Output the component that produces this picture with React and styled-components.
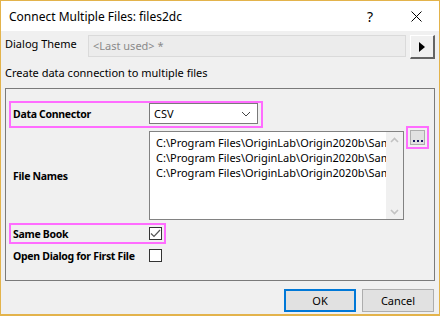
import styled, { createGlobalStyle } from "styled-components";

const GlobalStyle = createGlobalStyle`
    html, body {
        margin: 0;
        padding: 0;
        background: #f0f0f0;
    }
    body {
        font-family: "Noto Sans", "Liberation Sans", sans-serif;
        font-size: 11px;
        color: #000;
    }
`;

const Window = styled.div`
    box-sizing: border-box;
    width: 440px;
    height: 316px;
    border: 1px solid #e3b34b;
    border-bottom-width: 2px;
    background: #f0f0f0;
    display: flex;
    flex-direction: column;
`;

const TitleBar = styled.div`
    height: 30px;
    background: #fff;
    display: flex;
    align-items: center;
    padding-left: 8px;
    font-size: 12px;
`;

const Title = styled.div`
    flex: 1;
`;

const TitleButton = styled.div`
    width: ${props => props.$width}px;
    display: flex;
    justify-content: center;
    align-items: center;
    font-size: ${props => props.$size}px;
`;

const Body = styled.div`
    flex: 1;
    display: flex;
    flex-direction: column;
    padding: 4px 4px 0 4px;
`;

const ThemeRow = styled.div`
    display: flex;
    align-items: flex-start;
    height: 24px;
`;

const ThemeLabel = styled.div`
    width: 83px;
    line-height: 18px;
`;

const ThemeField = styled.div`
    box-sizing: border-box;
    width: 318px;
    height: 22px;
    border: 1px solid #dadada;
    background: #ececec;
    color: #8a8a8a;
    padding-left: 4px;
    line-height: 20px;
`;

const ArrowButton = styled.div`
    box-sizing: border-box;
    margin-left: 4px;
    width: 25px;
    height: 24px;
    background: #f0f0f0;
    border-top: 1px solid #fff;
    border-left: 1px solid #fff;
    border-right: 2px solid #646464;
    border-bottom: 2px solid #646464;
    display: flex;
    align-items: center;
    justify-content: center;
`;

const Description = styled.div`
    margin-top: 5px;
    line-height: 18px;
`;

const GroupBox = styled.div`
    box-sizing: border-box;
    margin-top: 6px;
    width: 430px;
    height: 193px;
    border: 1px solid #7a7a7a;
    padding: 12px 0 0 3px;
    display: flex;
    flex-direction: column;
    gap: 1px;
`;

const Row = styled.div`
    display: flex;
    align-items: ${props => (props.$top ? "flex-start" : "center")};
    width: fit-content;
    border: 2px solid ${props => (props.$highlight ? "#ff6cff" : "transparent")};
    padding: ${props => props.$pad || "0 3px 0 2px"};
`;

const Label = styled.div`
    width: 136px;
    font-weight: 700;
    font-size: 10.5px;
    letter-spacing: -0.3px;
    align-self: center;
    white-space: nowrap;
`;

const Select = styled.div`
    box-sizing: border-box;
    width: 109px;
    height: 21px;
    background: #fff;
    border: 1px solid #7a7a7a;
    display: flex;
    align-items: center;
    justify-content: space-between;
    padding: 0 6px 0 4px;
`;

const ListBox = styled.div`
    box-sizing: border-box;
    width: 255px;
    height: 89px;
    background: #fff;
    border: 1px solid #828282;
    display: flex;
`;

const ListItems = styled.div`
    flex: 1;
    overflow: hidden;
    padding: 3px 0 0 6px;
    white-space: nowrap;
    line-height: 15px;
`;

const ScrollBar = styled.div`
    width: 17px;
    background: #f0f0f0;
    display: flex;
    flex-direction: column;
    justify-content: space-between;
    align-items: center;
    padding: 5px 0 4px;
`;

const BrowseWrap = styled.div`
    margin: -5px 0 0 2px;
    border: 2px solid #ff6cff;
    padding: 2px;
`;

const BrowseButton = styled.div`
    box-sizing: border-box;
    width: 15px;
    height: 15px;
    background: #e1e1e1;
    border: 1px solid #adadad;
    display: flex;
    align-items: flex-end;
    justify-content: center;
    padding-bottom: 2px;
`;

const Dot = styled.span`
    width: 2px;
    height: 2px;
    margin: 0 1px;
    background: #1a1a60;
`;

const CheckBox = styled.div`
    box-sizing: border-box;
    width: 13px;
    height: 13px;
    background: #fff;
    border: 1px solid #333;
    display: flex;
    align-items: center;
    justify-content: center;
`;

const CheckRow = styled(Row)`
    height: 17px;
`;

const Footer = styled.div`
    flex: 1;
    display: flex;
    justify-content: flex-end;
    align-items: flex-start;
    gap: 6px;
    padding: 8px 1px 0 0;
`;

const Button = styled.div`
    box-sizing: border-box;
    width: 72px;
    height: 23px;
    background: #e1e1e1;
    border: ${props => (props.$default ? "2px solid #0078d7" : "1px solid #adadad")};
    display: flex;
    align-items: center;
    justify-content: center;
`;

const Chevron = ({ up }) => (
    <svg width="9" height="6" viewBox="0 0 9 6">
        <path
            d={up ? "M1 5 L4.5 1.5 L8 5" : "M1 1 L4.5 4.5 L8 1"}
            fill="none"
            stroke="#c2c2c2"
            strokeWidth="1.6"
        />
    </svg>
);

const files = [
    "C:\\Program Files\\OriginLab\\Origin2020b\\Samples\\Import and Export\\S15-125-03.csv",
    "C:\\Program Files\\OriginLab\\Origin2020b\\Samples\\Import and Export\\S21-235-07.csv",
    "C:\\Program Files\\OriginLab\\Origin2020b\\Samples\\Import and Export\\S32-014-04.csv",
];

const App = () => (
    <>
        <GlobalStyle />
        <Window>
            <TitleBar>
                <Title>Connect Multiple Files: files2dc</Title>
                <TitleButton $width={46} $size={14}>?</TitleButton>
                <TitleButton $width={46} $size={14}>
                    <svg width="11" height="11" viewBox="0 0 11 11">
                        <path d="M0.5 0.5 L10.5 10.5 M10.5 0.5 L0.5 10.5" stroke="#000" strokeWidth="1" />
                    </svg>
                </TitleButton>
            </TitleBar>
            <Body>
                <ThemeRow>
                    <ThemeLabel>Dialog Theme</ThemeLabel>
                    <ThemeField>&lt;Last used&gt; *</ThemeField>
                    <ArrowButton>
                        <svg width="6" height="10" viewBox="0 0 6 10">
                            <path d="M0 0 L6 5 L0 10 Z" fill="#000" />
                        </svg>
                    </ArrowButton>
                </ThemeRow>
                <Description>Create data connection to multiple files</Description>
                <GroupBox>
                    <Row $highlight $pad="0 3px 2px 2px">
                        <Label>Data Connector</Label>
                        <Select>
                            <span>CSV</span>
                            <svg width="10" height="6" viewBox="0 0 10 6">
                                <path d="M1 1 L5 5 L9 1" fill="none" stroke="#444" strokeWidth="1" />
                            </svg>
                        </Select>
                    </Row>
                    <Row $top $pad="0 0 0 2px">
                        <Label>File Names</Label>
                        <ListBox>
                            <ListItems>
                                {files.map(f => (
                                    <div key={f}>{f}</div>
                                ))}
                            </ListItems>
                            <ScrollBar>
                                <Chevron up />
                                <Chevron />
                            </ScrollBar>
                        </ListBox>
                        <BrowseWrap>
                            <BrowseButton>
                                <Dot />
                                <Dot />
                                <Dot />
                            </BrowseButton>
                        </BrowseWrap>
                    </Row>
                    <CheckRow $highlight $pad="0 2px 0 2px">
                        <Label>Same Book</Label>
                        <CheckBox>
                            <svg width="11" height="9" viewBox="0 0 11 9">
                                <path d="M1 4.5 L4 7.5 L10 1" fill="none" stroke="#555" strokeWidth="1.2" />
                            </svg>
                        </CheckBox>
                    </CheckRow>
                    <CheckRow>
                        <Label>Open Dialog for First File</Label>
                        <CheckBox />
                    </CheckRow>
                </GroupBox>
                <Footer>
                    <Button $default>OK</Button>
                    <Button>Cancel</Button>
                </Footer>
            </Body>
        </Window>
    </>
);

export default App;
